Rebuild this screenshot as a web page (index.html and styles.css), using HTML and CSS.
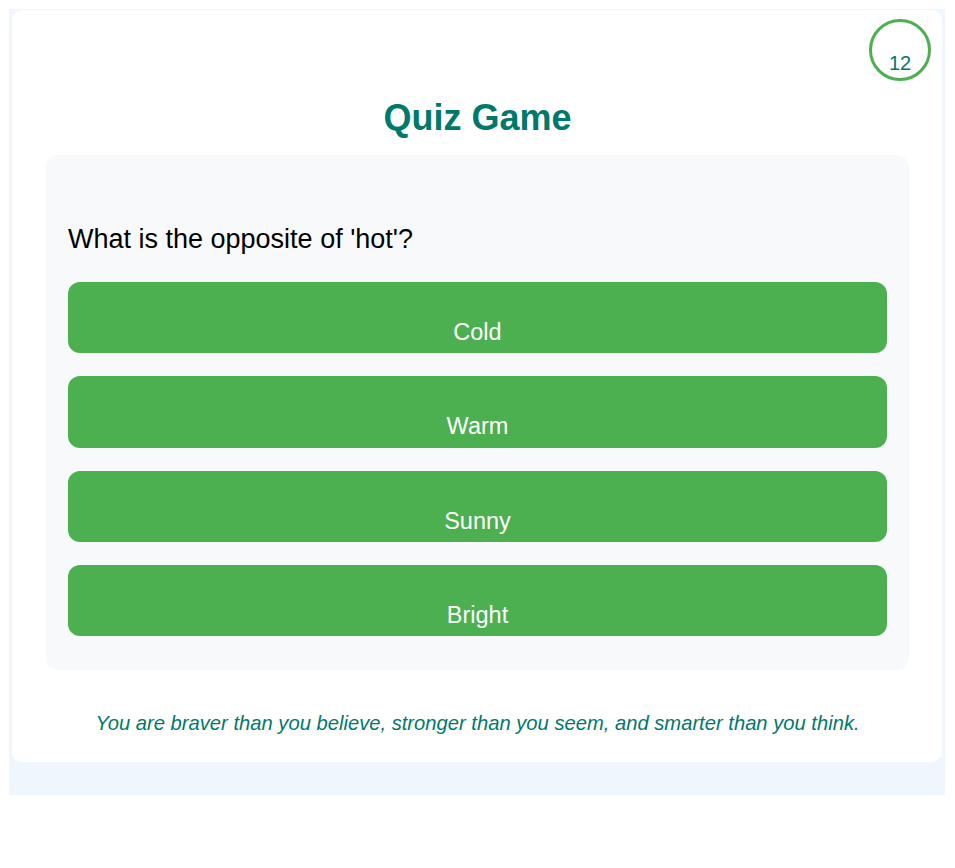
FILE: index.html
```html
<!DOCTYPE html>
<html lang="en">
<head>
<meta charset="utf-8">
<title>Quiz Game</title>
<link rel="stylesheet" href="styles.css">
</head>
<body>
<div class="page">
  <div class="card">
    <div class="timer-row">
      <div class="timer">12</div>
    </div>
    <h1 class="title">Quiz Game</h1>
    <div class="quiz">
      <p class="question">What is the opposite of 'hot'?</p>
      <div class="options">
        <button class="option">Cold</button>
        <button class="option">Warm</button>
        <button class="option">Sunny</button>
        <button class="option">Bright</button>
      </div>
    </div>
    <p class="quote">You are braver than you believe, stronger than you seem, and smarter than you think.</p>
  </div>
</div>
</body>
</html>
```
FILE: styles.css
```css
html, body {
  margin: 0;
  padding: 0;
  background: #ffffff;
  font-family: "Liberation Sans", Arial, sans-serif;
}
.page {
  margin: 9px 10px 0 9px;
  background: #eff6fe;
  height: 786px;
  padding: 1px 3px 0 3px;
  box-sizing: border-box;
}
.card {
  background: #ffffff;
  border-radius: 10px;
  height: 752px;
  box-sizing: border-box;
  padding: 9px 33px 0 34px;
}
.timer-row {
  display: flex;
  justify-content: flex-end;
  margin-right: -22px;
}
.timer {
  width: 62px;
  height: 62px;
  box-sizing: border-box;
  border: 3px solid #4caf50;
  border-radius: 50%;
  color: #00796b;
  font-size: 20px;
  line-height: 23px;
  text-align: center;
  padding-top: 30px;
}
.title {
  margin: 16px 0 17px;
  text-align: center;
  font-size: 36px;
  line-height: 41px;
  font-weight: bold;
  color: #00796b;
}
.quiz {
  background: #f8f9fa;
  border-radius: 12px;
  padding: 22px 22px 34px;
}
.question {
  margin: 47px 0 27px;
  font-size: 27px;
  line-height: 31px;
  color: #000000;
}
.options {
  display: flex;
  flex-direction: column;
  gap: 23px;
}
.option {
  display: block;
  width: 100%;
  height: 71.33px;
  box-sizing: border-box;
  border: none;
  border-radius: 12px;
  background: #4caf50;
  color: #ffffff;
  font-family: "Liberation Sans", Arial, sans-serif;
  font-size: 23.5px;
  line-height: 27px;
  padding: 37px 0 7px;
  text-align: center;
}
.quote {
  margin: 42px 0 0;
  text-align: center;
  font-style: italic;
  font-size: 20.2px;
  line-height: 23px;
  color: #00796b;
}
```
